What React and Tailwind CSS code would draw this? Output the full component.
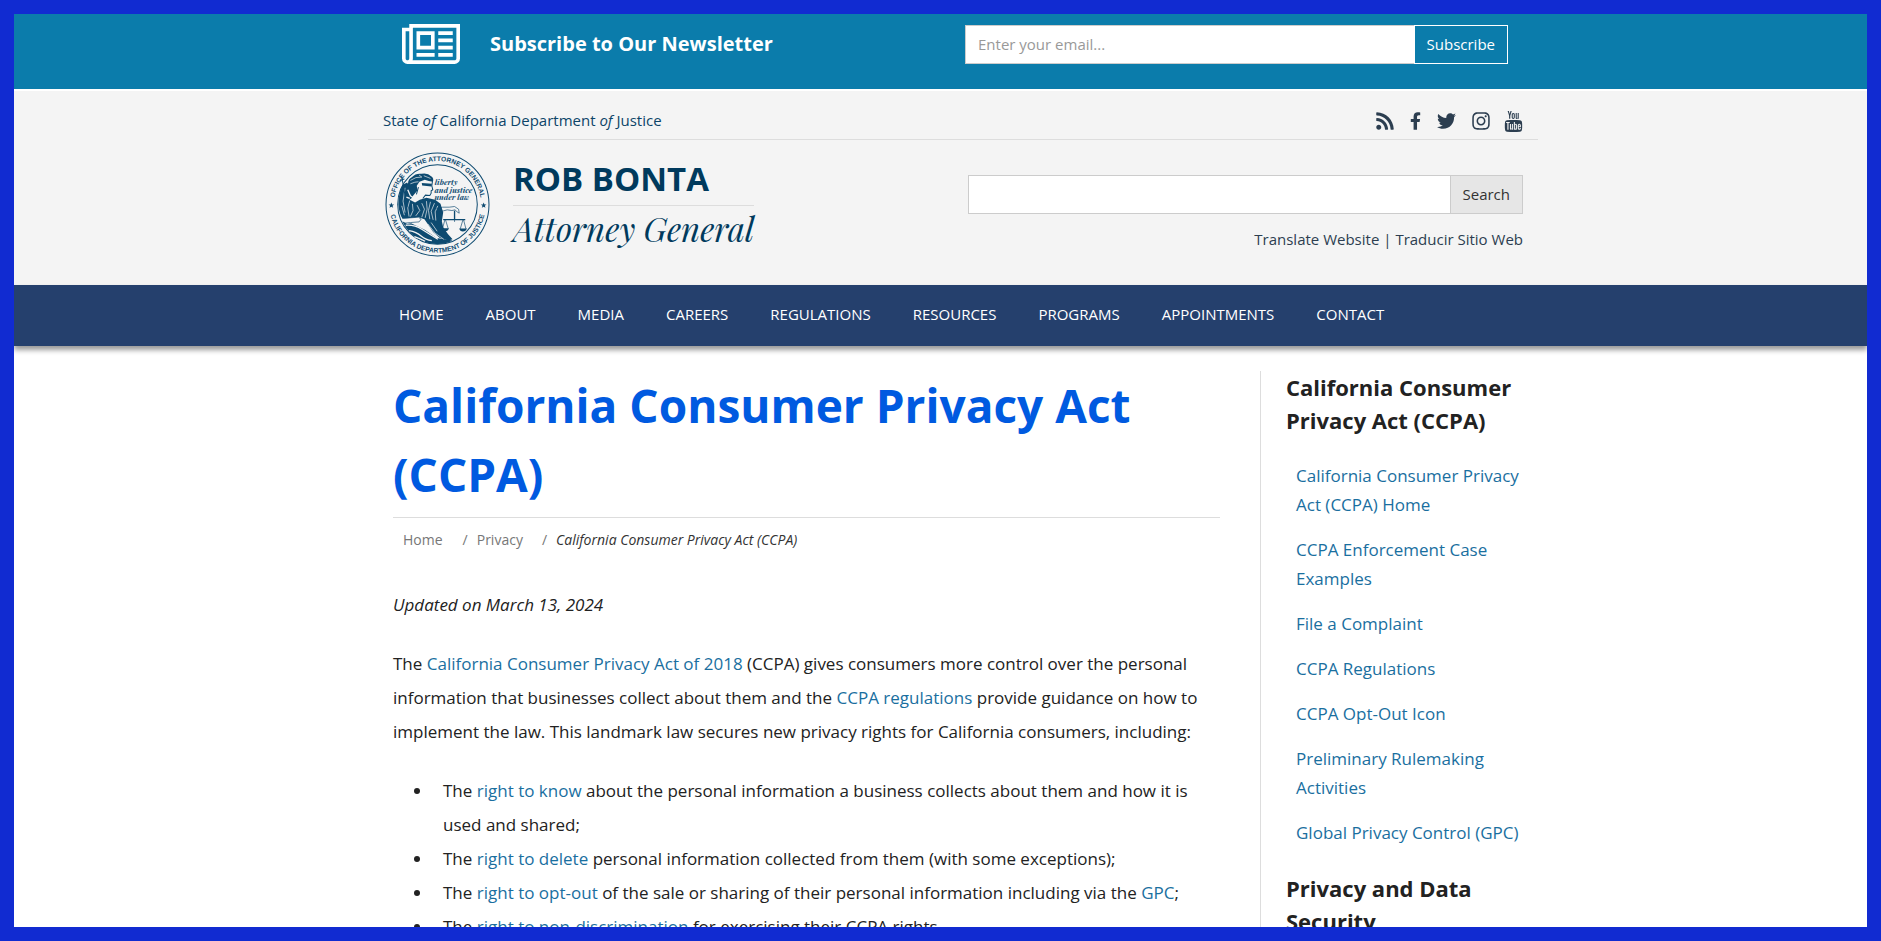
import React from 'react'
import { FaRss, FaFacebookF, FaTwitter, FaInstagram } from "react-icons/fa";
import { TfiYoutube } from "react-icons/tfi";

const menus = ["Home", "About", "Media", "Careers", "Regulations", "Resources", "Programs", "Appointments", "Contact"];

const socials = [
  { name: "RSS", icon: <FaRss className="w-[18px] h-5" /> },
  { name: "Facebook", icon: <FaFacebookF className="w-[11px] h-5" /> },
  { name: "Twitter", icon: <FaTwitter className="w-[19px] h-5" /> },
  { name: "Instagram", icon: <FaInstagram className="w-[18px] h-5" /> },
  { name: "YouTube", icon: <TfiYoutube className="w-[21px] h-[21px] -ml-[3px] -mr-px" /> },
];

const sideLinks = [
  "California Consumer Privacy Act (CCPA) Home",
  "CCPA Enforcement Case Examples",
  "File a Complaint",
  "CCPA Regulations",
  "CCPA Opt-Out Icon",
  "Preliminary Rulemaking Activities",
  "Global Privacy Control (GPC)",
];

const Container = ({ className = "", children }) => (
  <div className="pl-[25px]">
    <div className={`max-w-[1170px] mx-auto ${className}`}>{children}</div>
  </div>
)

const TextLink = ({ children }) => (
  <a href="#" className="text-[#1a6f9f] hover:underline">{children}</a>
)

const NewspaperIcon = () => (
  <svg viewBox="0 256 2048 1408" className="w-[58px] h-10 shrink-0" fill="currentColor" aria-hidden="true">
    <path d="M1024 640h-384v384h384v-384zm128 640v128h-640v-128h640zm0-768v640h-640v-640h640zm640 768v128h-512v-128h512zm0-256v128h-512v-128h512zm0-256v128h-512v-128h512zm0-256v128h-512v-128h512zm-1536 960v-960h-128v960q0 26 19 45t45 19 45-19 19-45zm1664 0v-1088h-1536v1088q0 33-11 64h1483q26 0 45-19t19-45zm128-1216v1216q0 80-56 136t-136 56h-1664q-80 0-136-56t-56-136v-1088h256v-128h1792z" />
  </svg>
)

const Seal = () => (
  <svg viewBox="32 23 314 314" className="w-[105px] h-[105px] shrink-0" fill="none" stroke="#0d4a70" role="img" aria-label="Office of the Attorney General seal">
    <defs>
      <path id="ring-top" d="M59 180a130 130 0 0 1 260 0" />
      <path id="ring-bottom" d="M45 180a144 144 0 0 0 288 0" />
    </defs>
    <circle cx="189" cy="180" r="154" strokeWidth="3" />
    <circle cx="189" cy="180" r="119" strokeWidth="3" />
    <g fill="#0d4a70" stroke="none" fontFamily="Liberation Sans, sans-serif" fontWeight="700" fontSize="20" textAnchor="middle">
      <text><textPath href="#ring-top" startOffset="50%">OFFICE OF THE ATTORNEY GENERAL</textPath></text>
      <text><textPath href="#ring-bottom" startOffset="50%">CALIFORNIA DEPARTMENT OF JUSTICE</textPath></text>
    </g>
    <g fill="#0d4a70" stroke="none">
      <path d="M51 174l2.500 6h6l-5 4 2 6-5.500-3.500-5.500 3.500 2-6-5-4h6z" />
      <path d="M327 174l2.500 6h6l-5 4 2 6-5.500-3.500-5.500 3.500 2-6-5-4h6z" />
    </g>
    <g fill="#0d4a70" stroke="none" fontFamily="Playfair Display, Liberation Serif, serif" fontWeight="700" fontStyle="italic" fontSize="23">
      <text x="181" y="122">liberty</text>
      <text x="180" y="145">and justice</text>
      <text x="180" y="168">under law</text>
    </g>
    {/* hair and blindfold */}
    <path fill="#0d4a70" stroke="none" d="M101 116q0-12 12-18 10-12 28-10 18-4 30 8 8 6 4 16l-12-2-12-4-16 6-8 12 2 14-12 14-8 12-8-8 2-14-4-12z" />
    <path d="M108 108q16-12 34-10M108 118q14-6 24-6M148 94l20 8M134 92l8 6" stroke="#f4f4f4" strokeWidth="2" />
    {/* face and neck */}
    <path d="M174 110l-2 14 3 12-5 3v7l-4 7-13-1-8 10M132 128l-6 22" strokeWidth="3" />
    <path d="M142 116l30 2-1 8-28-3z" fill="#0d4a70" stroke="none" />
    {/* shoulders and gown */}
    <path fill="#0d4a70" stroke="none" d="M84 122q-12 28-12 58 2 26 12 42l20 2 28-6 18 6 26 38 20 18 26 8 12-4-14-16-14-20-4-18 4-26-8-26-16-12-26-6-20 6-14 8-16-8 6-20-6-20-8-12z" />
    <path d="M92 130l-6 40 6 34M106 168l-6 22 4 26M114 178l2 20-8 18M128 182l8 16-12 16M142 176l8 18-8 24M156 170l2 24-6 26M168 172l-6 26 4 26M180 176l-10 24 6 26M190 184l-8 18 2 26M82 184l8 28" stroke="#f4f4f4" strokeWidth="2" />
    <path d="M100 136l8 18 12 8M96 158l10 4" stroke="#f4f4f4" strokeWidth="4" />
    {/* lap and rock */}
    <path d="M84 222l22-2 26-2 8 6-6 8-26 2-20 2" fill="#f4f4f4" strokeWidth="2" />
    <path fill="#0d4a70" stroke="none" d="M84 230l14 8 12-2 42 20 34 24 48 8q-20 12-50 10-40-2-66-24-22-18-34-44z" />
    <path d="M94 242q26-2 48 12t48 30M104 258q22 4 36 16t32 14M120 276q18 6 32 14" stroke="#f4f4f4" strokeWidth="4" />
    <path d="M160 238l22 28 26 18M170 234l18 26" stroke="#f4f4f4" strokeWidth="2" />
    {/* sword */}
    <path d="M82 96l16 92M76 108l14-4" strokeWidth="3" />
    {/* arm and scales */}
    <path d="M186 192q18-6 38-4l16-2 12 8 2 12-8-5-4-5-10 2-14-2q-12 4-20 4" strokeWidth="2" />
    <path d="M240 199v27M206 225h66" strokeWidth="4" />
    <path d="M211 226l-7 26M213 226l8 26M265 226l-8 27M267 226l7 27M240 226v6" strokeWidth="2" />
    <path d="M202 251h21q-2 9-11 9t-10-9zM254 252h23q-3 9-12 9t-11-9z" fill="#0d4a70" stroke="none" />
  </svg>
)

const Newsletter = () => (
  <div className="bg-[#0b7cab] text-white h-[75px]">
    <Container className="grid grid-cols-2">
      <div className="flex items-center gap-x-[30px] pl-[34px] pt-[9px]">
        <NewspaperIcon />
        <label htmlFor="email" className="text-[20px] leading-[30px] font-bold">Subscribe to Our Newsletter</label>
      </div>
      <form className="flex pl-3 pr-[30px] pt-[11px]">
        <input
          id="email"
          type="email"
          placeholder="Enter your email..."
          className="flex-1 min-w-0 h-[39px] px-3 pb-0.5 text-[15px] bg-white border border-r-0 border-[#ccc] placeholder:text-[#999]"
        />
        <button type="button" className="h-[39px] px-3 text-[15px] border border-white">Subscribe</button>
      </form>
    </Container>
  </div>
)

const Header = () => (
  <header className="mt-[2px] h-[194px] bg-[#f4f4f4] text-[15px] leading-6">
    <Container>
      <div className="flex justify-between items-center px-[15px] pt-[17px] pb-[7px] border-b border-[#ddd]">
        <div className="text-[#0d4468]">State <em>of</em> California Department <em>of</em> Justice</div>
        <div className="flex items-center gap-x-4 pt-0.5 text-[#2c3e50]">
          {socials.map((item) => (
            <a key={item.name} href="#" aria-label={item.name}>{item.icon}</a>
          ))}
        </div>
      </div>
      <div className="grid grid-cols-2">
        <div className="flex pl-[17px] pt-3 gap-x-[23px] text-[#003a5d]">
          <Seal />
          <div className="pt-[5px]">
            <div className="text-[33px] leading-[44px] font-bold">ROB BONTA</div>
            <div className="mt-1 pt-1.5 border-t border-[#ddd] font-['Playfair_Display','Liberation_Serif',serif] italic text-[33px] leading-8">Attorney General</div>
          </div>
        </div>
        <div className="px-[15px] pt-[35px]">
          <form className="flex">
            <input type="search" aria-label="Search" className="flex-1 min-w-0 h-[39px] px-3 bg-white border border-r-0 border-[#ccc]" />
            <button type="button" className="h-[39px] px-3 pb-0.5 bg-[#e6e6e6] border border-[#ccc] text-[#333]">Search</button>
          </form>
          <div className="mt-[13px] text-right text-[#2c3e50]">
            <a href="#">Translate Website</a> | <a href="#">Traducir Sitio Web</a>
          </div>
        </div>
      </div>
    </Container>
  </header>
)

const Navbar = () => (
  <nav className="bg-[#25406d] shadow-[0_4px_5px_rgba(0,0,0,0.4)] text-white">
    <Container className="flex pl-[10px] pb-0.5">
      {menus.map((item) => (
        <a key={item} href="#" className="px-[21px] text-[15px] leading-[59px] uppercase">{item}</a>
      ))}
    </Container>
  </nav>
)

const Sidebar = () => (
  <aside className="w-[263px] shrink-0 border-l border-[#ddd] pl-[25px]">
    <h2 className="text-[22px] leading-[33px] font-bold">California Consumer Privacy Act (CCPA)</h2>
    <ul className="mt-6 mb-[25px] pl-[10px] flex flex-col gap-y-4 leading-[29px]">
      {sideLinks.map((item) => (
        <li key={item}><TextLink>{item}</TextLink></li>
      ))}
    </ul>
    <h2 className="text-[22px] leading-[33px] font-bold">Privacy and Data Security</h2>
  </aside>
)

const Article = () => (
  <main className="flex-1 min-w-0 leading-[34px]">
    <h1 className="text-[46px] leading-[69px] font-bold text-[#005ae0] pb-2 border-b border-[#ddd]">
      California Consumer Privacy Act (CCPA)
    </h1>
    <ol className="flex mt-3 pl-[10px] text-[14px] leading-5 text-[#777]">
      <li className="pr-5"><a href="#">Home</a></li>
      <li className="pr-[19px]"><span className="pr-[9px]">/</span><a href="#">Privacy</a></li>
      <li><span className="pr-[9px]">/</span><em className="text-[#333]">California Consumer Privacy Act (CCPA)</em></li>
    </ol>
    <p className="mt-[38px]"><em>Updated on March 13, 2024</em></p>
    <p className="mt-[25px]">
      The <TextLink>California Consumer Privacy Act of 2018</TextLink> (CCPA) gives consumers more control over the personal
      information that businesses collect about them and the <TextLink>CCPA regulations</TextLink> provide guidance on how to
      implement the law. This landmark law secures new privacy rights for California consumers, including:
    </p>
    <ul className="mt-[25px] pl-10 list-disc">
      <li className="pl-[10px]">The <TextLink>right to know</TextLink> about the personal information a business collects about them and how it is used and shared;</li>
      <li className="pl-[10px]">The <TextLink>right to delete</TextLink> personal information collected from them (with some exceptions);</li>
      <li className="pl-[10px]">The <TextLink>right to opt-out</TextLink> of the sale or sharing of their personal information including via the <TextLink>GPC</TextLink>;</li>
      <li className="pl-[10px]">The <TextLink>right to non-discrimination</TextLink> for exercising their CCPA rights.</li>
    </ul>
  </main>
)

const App = () => {
  return (
    <div className="h-screen overflow-hidden border-[14px] border-[#112bd1] bg-white font-['Open_Sans',sans-serif] text-[17px] text-[#222]">
      <Newsletter />
      <Header />
      <Navbar />
      <Container className="flex gap-x-10 pt-[25px] pl-[25px] pr-[15px]">
        <Article />
        <Sidebar />
      </Container>
    </div>
  )
}

export default App
